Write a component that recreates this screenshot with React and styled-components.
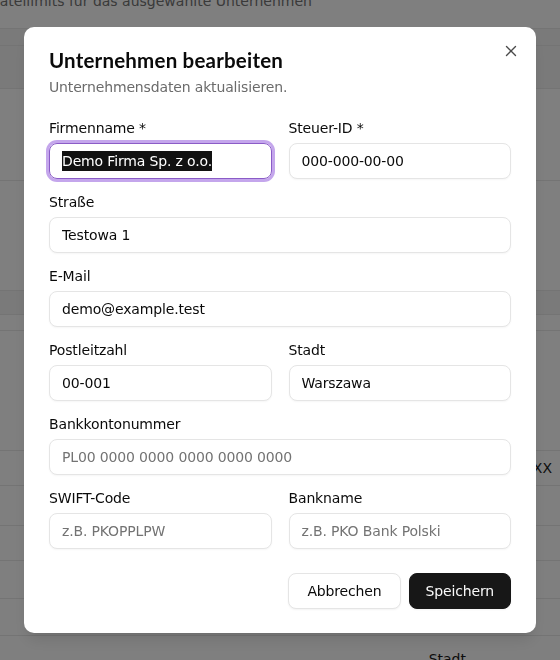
import React from 'react'
import styled, { createGlobalStyle } from 'styled-components'
import { X } from 'lucide-react'

const GlobalStyle = createGlobalStyle`
  html, body {
    margin: 0;
    padding: 0;
    height: 660px;
    overflow: hidden;
    background: #ffffff;
    font-family: "DejaVu Sans", "Noto Sans", sans-serif;
  }
  * { box-sizing: border-box; }
`

const bgRows = [
    { h: 17, band: true },
    { h: 43, band: true },
    { h: 92 },
    { h: 110 },
    { h: 24, band: true },
    { h: 16 },
    { h: 120 },
    { h: 35, cell: 'XX' },
    { h: 40 },
    { h: 35 },
    { h: 38 },
    { h: 37 },
    { h: 40, cell: 'Stadt', left: true },
]

export default function App() {
    return (
        <>
            <GlobalStyle />
            <Page>
                <PageNote>Dateilimits für das ausgewählte Unternehmen</PageNote>
                <Table>
                    {bgRows.map((r, i) => (
                        <BgRow key={i} $h={r.h} $band={r.band}>
                            {r.cell && <BgCell $left={r.left}>{r.cell}</BgCell>}
                        </BgRow>
                    ))}
                </Table>
            </Page>

            <Overlay>
                <Dialog>
                    <CloseButton aria-label="Schließen">
                        <X size={18} strokeWidth={1.8} />
                    </CloseButton>

                    <Title>Unternehmen bearbeiten</Title>
                    <Subtitle>Unternehmensdaten aktualisieren.</Subtitle>

                    <Form>
                        <Field>
                            <Label>Firmenname *</Label>
                            <FakeInput $focused>
                                <Selected>Demo Firma Sp. z o.o.</Selected>
                            </FakeInput>
                        </Field>
                        <Field>
                            <Label>Steuer-ID *</Label>
                            <Input defaultValue="000-000-00-00" />
                        </Field>
                        <Field $wide>
                            <Label>Straße</Label>
                            <Input defaultValue="Testowa 1" />
                        </Field>
                        <Field $wide>
                            <Label>E-Mail</Label>
                            <Input defaultValue="demo@example.test" />
                        </Field>
                        <Field>
                            <Label>Postleitzahl</Label>
                            <Input defaultValue="00-001" />
                        </Field>
                        <Field>
                            <Label>Stadt</Label>
                            <Input defaultValue="Warszawa" />
                        </Field>
                        <Field $wide>
                            <Label>Bankkontonummer</Label>
                            <Input placeholder="PL00 0000 0000 0000 0000 0000" />
                        </Field>
                        <Field>
                            <Label>SWIFT-Code</Label>
                            <Input placeholder="z.B. PKOPPLPW" />
                        </Field>
                        <Field>
                            <Label>Bankname</Label>
                            <Input placeholder="z.B. PKO Bank Polski" />
                        </Field>
                    </Form>

                    <Footer>
                        <Button $pad={18}>Abbrechen</Button>
                        <Button $primary>Speichern</Button>
                    </Footer>
                </Dialog>
            </Overlay>
        </>
    )
}

const Page = styled.div`
    width: 560px;
    height: 660px;
    background: #ffffff;
    color: #7a7a7a;
`

const PageNote = styled.p`
    margin: -9px 0 0 -11px;
    font-size: 14px;
    line-height: 20px;
    white-space: nowrap;
    color: #747474;
`

const Table = styled.div`
    margin-top: 17px;
    border-top: 1px solid #e8e8e8;
`

const BgRow = styled.div`
    position: relative;
    height: ${p => p.$h}px;
    background: ${p => (p.$band ? '#f4f4f4' : '#ffffff')};
    border-bottom: 1px solid #e8e8e8;
    display: flex;
    align-items: center;
    justify-content: flex-end;
`

const BgCell = styled.span`
    font-size: 14px;
    color: #1a1a1a;
    margin-right: ${p => (p.$left ? '94px' : '8px')};
    margin-top: ${p => (p.$left ? '6px' : '0')};
`

const Overlay = styled.div`
    position: fixed;
    inset: 0;
    background: rgba(0, 0, 0, 0.5);
    display: flex;
    align-items: center;
    justify-content: center;
`

const Dialog = styled.div`
    position: relative;
    width: 512px;
    background: #ffffff;
    border-radius: 10px;
    padding: 24px 25px;
    box-shadow: 0 10px 15px -3px rgba(0, 0, 0, 0.1), 0 4px 6px -4px rgba(0, 0, 0, 0.1);
    color: #0a0a0a;
`

const CloseButton = styled.button`
    position: absolute;
    top: 15px;
    right: 16px;
    width: 18px;
    height: 18px;
    padding: 0;
    border: 0;
    background: transparent;
    color: #4a4a4a;
    display: flex;
    align-items: center;
    justify-content: center;
    cursor: pointer;
`

const Title = styled.h2`
    margin: 0;
    font-family: Lato, "DejaVu Sans", sans-serif;
    font-size: 20.5px;
    line-height: 18px;
    font-weight: 700;
    letter-spacing: 0.2px;
    color: #0a0a0a;
`

const Subtitle = styled.p`
    margin: 8px 0 0;
    font-size: 14px;
    line-height: 20px;
    color: #6b6b6b;
    letter-spacing: -0.15px;
`

const Form = styled.div`
    margin-top: 21px;
    display: grid;
    grid-template-columns: 1fr 1fr;
    column-gap: 17px;
    row-gap: 13px;
`

const Field = styled.div`
    display: flex;
    flex-direction: column;
    gap: 5px;
    grid-column: ${p => (p.$wide ? '1 / -1' : 'auto')};
`

const Label = styled.label`
    font-size: 14px;
    line-height: 20px;
    font-weight: 500;
    color: #0a0a0a;
    letter-spacing: -0.15px;
`

const Input = styled.input`
    width: 100%;
    height: 36px;
    padding: 0 12px;
    border: 1px solid #e5e5e5;
    border-radius: 8px;
    background: #ffffff;
    font-family: "DejaVu Sans", "Noto Sans", sans-serif;
    font-size: 14px;
    letter-spacing: -0.15px;
    color: #0a0a0a;
    outline: none;
    box-shadow: 0 1px 2px rgba(0, 0, 0, 0.04);

    &::placeholder {
        color: #737373;
    }
`

const FakeInput = styled.div`
    height: 36px;
    padding: 0 12px;
    display: flex;
    align-items: center;
    border: 1px solid ${p => (p.$focused ? '#8b5cc7' : '#e5e5e5')};
    border-radius: 8px;
    box-shadow: ${p => (p.$focused ? '0 0 0 3px rgba(176, 136, 230, 0.75)' : 'none')};
    font-size: 14px;
    letter-spacing: -0.15px;
    color: #0a0a0a;
`

const Selected = styled.span`
    background: #111111;
    color: #ffffff;
    line-height: 20px;
`

const Footer = styled.div`
    margin-top: 24px;
    display: flex;
    justify-content: flex-end;
    gap: 8px;
`

const Button = styled.button`
    height: 36px;
    padding: 0 ${p => p.$pad ?? 16}px;
    border-radius: 8px;
    font-family: "DejaVu Sans", "Noto Sans", sans-serif;
    font-size: 14px;
    font-weight: 500;
    letter-spacing: -0.15px;
    cursor: pointer;
    border: 1px solid ${p => (p.$primary ? '#171717' : '#e5e5e5')};
    background: ${p => (p.$primary ? '#171717' : '#ffffff')};
    color: ${p => (p.$primary ? '#fafafa' : '#0a0a0a')};
    box-shadow: 0 1px 2px rgba(0, 0, 0, 0.05);
`
